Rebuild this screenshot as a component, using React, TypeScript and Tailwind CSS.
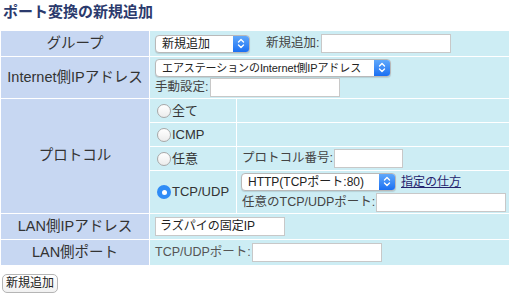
import React from "react";

const font = "font-['Liberation_Sans','Noto_Sans_CJK_JP',sans-serif]";

// Mac-style select: white box with a blue stepper button on the right
const FakeSelect = ({ value, width, size = "text-[12px]" }: { value: string; width: string; size?: string }) => (
  <div className={`flex h-[18px] items-stretch rounded-[4px] border border-[#b9b9b9] bg-white shadow-[0_1px_1px_rgba(0,0,0,0.12)] ${width}`}>
    <span className={`flex-1 overflow-hidden whitespace-nowrap pl-[6px] leading-[17px] text-[#222] ${size}`}>{value}</span>
    <span className="flex w-[16px] items-center justify-center rounded-r-[3px] bg-gradient-to-b from-[#5fa8fb] to-[#1a6ff2]">
      <svg width="8" height="11" viewBox="0 0 8 11" fill="none" stroke="white" strokeWidth="1.4" strokeLinecap="round" strokeLinejoin="round">
        <path d="M1.5 4 L4 1.5 L6.5 4" />
        <path d="M1.5 7 L4 9.5 L6.5 7" />
      </svg>
    </span>
  </div>
);

const TextBox = ({ width, value }: { width: string; value?: string }) => (
  <div className={`h-[19px] border border-[#c8c8c8] bg-white pl-[4px] text-[12px] leading-[17px] text-[#222] ${width}`}>
    {value}
  </div>
);

const Radio = ({ checked, label }: { checked?: boolean; label: string }) => (
  <div className="flex items-center gap-[1px] pl-[7px] text-[13px] text-[#333]">
    {checked ? (
      <span className="flex h-[14px] w-[14px] items-center justify-center rounded-full bg-[#2f8cf6]">
        <span className="h-[5px] w-[5px] rounded-full bg-white" />
      </span>
    ) : (
      <span className="h-[14px] w-[14px] rounded-full border border-[#a8a8a8] bg-gradient-to-b from-white to-[#ececec]" />
    )}
    <span>{label}</span>
  </div>
);

const Th = ({ children, rowSpan, h }: { children: React.ReactNode; rowSpan?: number; h?: string }) => (
  <td rowSpan={rowSpan} className={`bg-[#c7d7f2] p-0 text-center align-middle text-[14.5px] text-[#333] ${h ?? ""}`}>
    {children}
  </td>
);

const App = () => {
  return (
    <div className={`h-[299px] w-[517px] bg-white ${font}`}>
      <h2 className="h-[30px] pl-[3px] pt-[2px] text-[15px] font-bold leading-[20px] text-[#2b3a6d]">
        ポート変換の新規追加
      </h2>

      <table className="w-[510px] table-fixed border-separate border-spacing-[1px]">
        <colgroup>
          <col className="w-[148px]" />
          <col className="w-[86px]" />
          <col />
        </colgroup>
        <tbody>
          <tr>
            <Th h="h-[25px]">グループ</Th>
            <td colSpan={2} className="bg-[#cdedf4] p-0 pl-[5px] align-middle">
              <div className="flex items-center text-[12.5px] text-[#444]">
                <FakeSelect value="新規追加" width="w-[95px]" />
                <span className="ml-[16px] mr-[2px]">新規追加:</span>
                <TextBox width="w-[130px]" />
              </div>
            </td>
          </tr>
          <tr>
            <Th h="h-[41px]">Internet側IPアドレス</Th>
            <td colSpan={2} className="bg-[#cdedf4] p-0 pl-[5px] align-middle">
              <div className="flex flex-col gap-[1px] text-[12.5px] text-[#444]">
                <FakeSelect value="エアステーションのInternet側IPアドレス" width="w-[236px]" size="text-[11px] tracking-[-0.1px]" />
                <div className="flex items-center">
                  <span className="mr-[2px]">手動設定:</span>
                  <TextBox width="w-[130px]" />
                </div>
              </div>
            </td>
          </tr>
          <tr>
            <Th rowSpan={4}>プロトコル</Th>
            <td className="h-[23px] bg-[#cdedf4] p-0">
              <Radio label="全て" />
            </td>
            <td className="bg-[#cdedf4] p-0" />
          </tr>
          <tr>
            <td className="h-[23px] bg-[#cdedf4] p-0">
              <Radio label="ICMP" />
            </td>
            <td className="bg-[#cdedf4] p-0" />
          </tr>
          <tr>
            <td className="h-[23px] bg-[#cdedf4] p-0">
              <Radio label="任意" />
            </td>
            <td className="bg-[#cdedf4] p-0 pl-[5px]">
              <div className="flex items-center text-[12.5px] text-[#444]">
                <span className="mr-[1px]">プロトコル番号:</span>
                <TextBox width="w-[69px]" />
              </div>
            </td>
          </tr>
          <tr>
            <td className="h-[42px] bg-[#cdedf4] p-0">
              <Radio checked label="TCP/UDP" />
            </td>
            <td className="bg-[#cdedf4] p-0 pl-[4px]">
              <div className="flex flex-col gap-[2px] text-[12.5px] text-[#444]">
                <div className="flex items-center">
                  <FakeSelect value="HTTP(TCPポート:80)" width="w-[155px]" />
                  <a className="ml-[5px] text-[12px] text-[#24246e] underline">指定の仕方</a>
                </div>
                <div className="flex items-center">
                  <span className="mr-[1px] pl-[1px]">任意のTCP/UDPポート:</span>
                  <TextBox width="w-[130px]" />
                </div>
              </div>
            </td>
          </tr>
          <tr>
            <Th h="h-[25px]">LAN側IPアドレス</Th>
            <td colSpan={2} className="bg-[#cdedf4] p-0 pl-[5px] align-middle">
              <TextBox width="w-[130px]" value="ラズパイの固定IP" />
            </td>
          </tr>
          <tr>
            <Th h="h-[25px]">LAN側ポート</Th>
            <td colSpan={2} className="bg-[#cdedf4] p-0 pl-[5px] align-middle">
              <div className="flex items-center text-[12.5px] text-[#555]">
                <span className="mr-[1px]">TCP/UDPポート:</span>
                <TextBox width="w-[130px]" />
              </div>
            </td>
          </tr>
        </tbody>
      </table>

      <button className="ml-[2px] mt-[8px] h-[19px] w-[56px] rounded-[5px] border border-[#b5b5b5] bg-gradient-to-b from-white to-[#f1f1f1] text-[12px] leading-[17px] text-[#222]">
        新規追加
      </button>
    </div>
  );
};

export default App;
